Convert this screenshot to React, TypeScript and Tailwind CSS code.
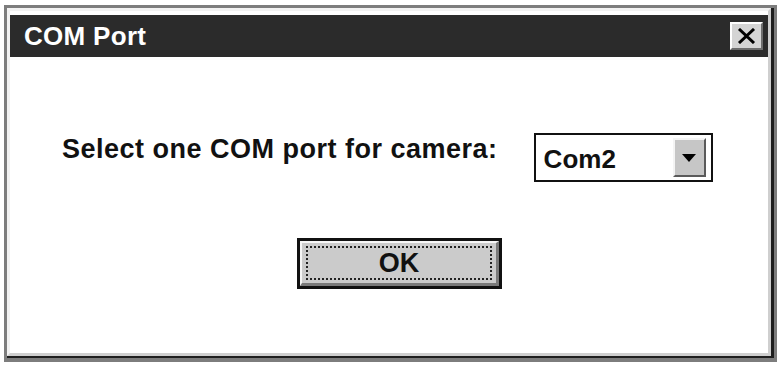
const App = () => {
  return (
    <div className="w-[779px] h-[365px] bg-white pt-[5px] pl-[4px] font-['Liberation_Sans',Arial,sans-serif]">
      <div className="w-[773px] h-[357px] border-[3px] border-b-[4px] border-[#7d7d7d]">
        <div className="h-full border-r-[3px] border-b-[2px] border-[#1e1e1e]">
          <div className="h-full flex flex-col border-t-[3px] border-l-[3px] border-[#f2f2f2] border-r-[3px] border-b-[3px] border-r-[#cfcfcf] border-b-[#cfcfcf] pt-[4px] bg-white">
            {/* title bar */}
            <div className="h-[42px] bg-[#2b2b2b] flex items-center justify-between pl-[14px] pr-[5px]">
              <span className="text-white font-bold text-[26px] tracking-[0.3px] leading-none">
                COM Port
              </span>
              <div className="w-[33px] h-[28px] bg-[#d4d4d4] border-t-2 border-l-2 border-white border-r-2 border-b-2 border-r-[#6e6e6e] border-b-[#6e6e6e] flex items-center justify-center">
                <svg width="19" height="16" viewBox="0 0 19 16">
                  <path d="M2 1 L17 15 M17 1 L2 15" stroke="#000" strokeWidth="3" />
                </svg>
              </div>
            </div>

            {/* body */}
            <div className="flex flex-col pt-[76px]">
              <div className="flex items-start pl-[52px]">
                <span className="mt-[3px] text-[27px] font-bold tracking-[0.5px] leading-none text-[#111] pt-[0px]">
                  Select one COM port for camera:
                </span>
                <div className="ml-[36px] w-[179px] h-[49px] border-2 border-[#111] bg-white flex items-center justify-between pl-[8px] pr-[5px]">
                  <span className="text-[26px] font-bold leading-none text-[#111] mt-[2px]">Com2</span>
                  <div className="w-[33px] h-[39px] bg-[#c6c6c6] border-t-2 border-l-2 border-[#f4f4f4] border-r-2 border-b-2 border-r-[#5a5a5a] border-b-[#5a5a5a] flex items-center justify-center">
                    <svg width="14" height="8" viewBox="0 0 14 8">
                      <path d="M0 0 L14 0 L7 8 Z" fill="#000" />
                    </svg>
                  </div>
                </div>
              </div>

              <div className="pl-[287px] pt-[56px]">
                <div className="w-[205px] h-[51px] border-[3px] border-[#111] bg-[#cbcbcb]">
                  <div className="h-full border-t-2 border-l-2 border-[#f6f6f6] border-r-[3px] border-b-[3px] border-r-[#7a7a7a] border-b-[#7a7a7a] px-[4px] py-[3px]">
                    <div className="h-full border-2 border-dotted border-[#222] flex items-center justify-center">
                      <span className="text-[27px] font-bold leading-none text-[#111]">OK</span>
                    </div>
                  </div>
                </div>
              </div>
            </div>
          </div>
        </div>
      </div>
    </div>
  )
}

export default App
